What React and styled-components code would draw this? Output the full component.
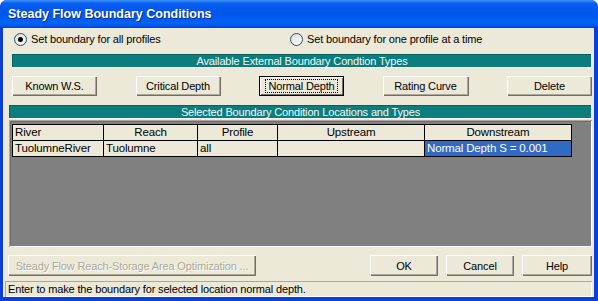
import React from "react";
import styled, { createGlobalStyle } from "styled-components";

const GlobalStyle = createGlobalStyle`
  html, body {
    margin: 0;
    padding: 0;
    background: #fff;
  }
  body {
    font-family: "Liberation Sans", Arial, sans-serif;
    font-size: 11px;
    letter-spacing: -0.15px;
  }
`;

const Window = styled.div`
  width: 598px;
  height: 301px;
  box-sizing: border-box;
  display: flex;
  flex-direction: column;
  background: #0b3fd6;
  border-radius: 7px 7px 0 0;
  overflow: hidden;
`;

const TitleBar = styled.div`
  height: 28px;
  flex: none;
  display: flex;
  align-items: center;
  padding-left: 8px;
  background: linear-gradient(
    to bottom,
    #3d95ff 0%,
    #0a5ef0 12%,
    #0055ea 45%,
    #0062f6 80%,
    #0058ee 92%,
    #0040d8 100%
  );
  color: #fff;
  font-weight: bold;
  font-size: 12.5px;
  letter-spacing: 0;
  text-shadow: 1px 1px 0 #0a2a8a;
`;

const Body = styled.div`
  flex: 1;
  margin: 0 4px 4px 3px;
  background: #ece9d8;
  display: flex;
  flex-direction: column;
`;

const RadioRow = styled.div`
  display: flex;
  align-items: center;
  height: 16px;
  margin-top: 3px;
  padding-left: 11px;
`;

const RadioItem = styled.label`
  display: flex;
  align-items: center;
  gap: 4px;
  width: ${(p) => p.$width}px;
  color: #000;
`;

const RadioCircle = styled.span`
  width: 11px;
  height: 11px;
  border-radius: 50%;
  border: 1px solid #1c5180;
  background: linear-gradient(135deg, #dcdcd7, #fff);
  display: flex;
  align-items: center;
  justify-content: center;
  &::after {
    content: "";
    width: 5px;
    height: 5px;
    border-radius: 50%;
    background: ${(p) => (p.$checked ? "#000" : "transparent")};
  }
`;

const SectionBar = styled.div`
  height: 14px;
  margin: ${(p) => p.$mt}px 2px 0 ${(p) => p.$ml}px;
  background: #0b7d7d;
  color: #f2fafa;
  display: flex;
  align-items: center;
  justify-content: center;
  font-size: 11px;
  line-height: 14px;
  box-shadow: inset -1px -1px 0 #fff, inset 1px 1px 0 #0a5f5f;
`;

const ButtonRow = styled.div`
  display: grid;
  grid-template-columns: 85px 85px 85px 86px 85px;
  justify-content: space-between;
  margin: 8px 2px 0 9px;
  height: 20px;
`;

const Button = styled.button`
  font-family: "Liberation Sans", Arial, sans-serif;
  font-size: 11px;
  letter-spacing: -0.15px;
  height: ${(p) => p.$h || 20}px;
  padding: 0;
  background: #ece9d8;
  color: ${(p) => (p.disabled ? "#aca899" : "#000")};
  border: none;
  box-shadow: ${(p) =>
    p.$focused
      ? "inset 1px 1px 0 #000, inset -1px -1px 0 #000, inset 2px 2px 0 #fff, inset -2px -2px 0 #716f64"
      : "inset 1px 1px 0 #fff, inset -1px -1px 0 #716f64, inset -2px -2px 0 #aca899"};
  display: flex;
  align-items: center;
  justify-content: center;
  cursor: default;
  ${(p) => (p.disabled ? "text-shadow: 1px 1px 0 #fff;" : "")}
`;

const FocusText = styled.span`
  outline: 1px dotted #000;
  padding: 0 2px;
  line-height: 12px;
`;

const GridArea = styled.div`
  margin: 1px 2px 0 6px;
  height: 127px;
  background: #808080;
  box-shadow: inset 1px 1px 0 #aca899, inset -1px -1px 0 #fff, inset 2px 2px 0 #716f64;
  padding: 4px 0 0 3px;
  box-sizing: border-box;
`;

const Table = styled.div`
  display: grid;
  grid-template-columns: 91px 94px 80px 147px 147px;
  grid-auto-rows: 16px;
  width: max-content;
  border-left: 1px solid #000;
  border-top: 1px solid #000;
`;

const Cell = styled.div`
  box-sizing: border-box;
  border-right: 1px solid #000;
  border-bottom: 1px solid #000;
  background: ${(p) => (p.$selected ? "#316ac5" : "#ece9d8")};
  color: ${(p) => (p.$selected ? "#fff" : "#000")};
  text-align: ${(p) => (p.$center ? "center" : "left")};
  padding: 0 2px;
  font-size: 11.5px;
  line-height: 15px;
  white-space: nowrap;
  overflow: hidden;
`;

const BottomRow = styled.div`
  display: flex;
  margin: 8px 2px 0 5px;
  height: 21px;
`;

const Spacer = styled.div`
  flex: 1;
`;

const DialogButtons = styled.div`
  display: grid;
  grid-template-columns: 68px 68px 70px;
  gap: 8px;
`;

const StatusBar = styled.div`
  margin: 5px 2px 0 2px;
  height: 16px;
  box-shadow: inset 1px 1px 0 #aca899, inset -1px -1px 0 #fff;
  padding-left: 3px;
  display: flex;
  align-items: center;
  font-size: 11px;
  color: #000;
`;

const columns = ["River", "Reach", "Profile", "Upstream", "Downstream"];

const App = () => {
  return (
    <>
      <GlobalStyle />
      <Window>
        <TitleBar>Steady Flow Boundary Conditions</TitleBar>
        <Body>
          <RadioRow>
            <RadioItem $width={276}>
              <RadioCircle $checked />
              Set boundary for all profiles
            </RadioItem>
            <RadioItem $width={280}>
              <RadioCircle />
              Set boundary for one profile at a time
            </RadioItem>
          </RadioRow>
          <SectionBar $mt={7} $ml={9}>
            Available External Boundary Condtion Types
          </SectionBar>
          <ButtonRow>
            <Button>Known W.S.</Button>
            <Button>Critical Depth</Button>
            <Button $focused>
              <FocusText>Normal Depth</FocusText>
            </Button>
            <Button>Rating Curve</Button>
            <Button>Delete</Button>
          </ButtonRow>
          <SectionBar $mt={9} $ml={6}>
            Selected Boundary Condition Locations and Types
          </SectionBar>
          <GridArea>
            <Table>
              {columns.map((c, i) => (
                <Cell key={c} $center={i > 0}>
                  {c}
                </Cell>
              ))}
              <Cell>TuolumneRiver</Cell>
              <Cell>Tuolumne</Cell>
              <Cell>all</Cell>
              <Cell></Cell>
              <Cell $selected>Normal Depth S = 0.001</Cell>
            </Table>
          </GridArea>
          <BottomRow>
            <Button disabled $h={21} style={{ width: 248 }}>
              Steady Flow Reach-Storage Area Optimization ...
            </Button>
            <Spacer />
            <DialogButtons>
              <Button $h={21}>OK</Button>
              <Button $h={21}>Cancel</Button>
              <Button $h={21}>Help</Button>
            </DialogButtons>
          </BottomRow>
          <StatusBar>
            Enter to make the boundary for selected location normal depth.
          </StatusBar>
        </Body>
      </Window>
    </>
  );
};

export default App;
